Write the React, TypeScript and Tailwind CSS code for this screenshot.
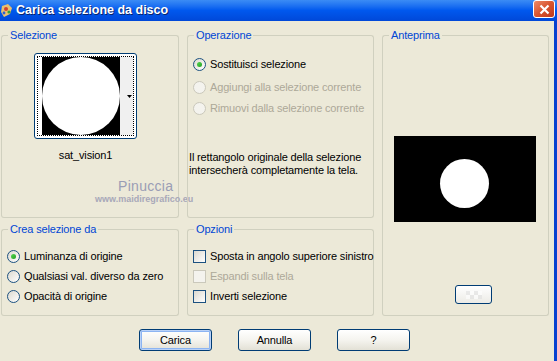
import type { ReactNode } from 'react';

const FONT = { fontFamily: '"Liberation Sans", Arial, sans-serif' };

function Group({ label, className, bodyClass, children }: { label: string; className?: string; bodyClass?: string; children?: ReactNode }) {
  return (
    <div className={`flex flex-col ${className ?? ''}`}>
      <div className="flex h-[13px]">
        <div className="w-[7px] h-[7px] self-end border-t border-l border-[#D0D0BF] rounded-tl-[3px]" />
        <span className="px-[2px] leading-[13px] text-[#0046D5] whitespace-nowrap">{label}</span>
        <div className="flex-1 h-[7px] self-end border-t border-r border-[#D0D0BF] rounded-tr-[3px]" />
      </div>
      <div className={`flex-1 relative border-x border-b border-[#D0D0BF] rounded-b-[3px] ${bodyClass ?? ''}`}>{children}</div>
    </div>
  );
}

function Radio({ checked, disabled }: { checked?: boolean; disabled?: boolean }) {
  return (
    <span
      className={`relative w-[13px] h-[13px] rounded-full border shrink-0 flex items-center justify-center ${
        disabled
          ? 'border-[#CAC8BB] bg-[#F4F3EE]'
          : 'border-[#1C5180] bg-gradient-to-br from-[#DCD9CF] to-white'
      }`}
    >
      {checked && <span className="w-[5px] h-[5px] rounded-full bg-gradient-to-br from-[#55D551] to-[#21A121]" />}
    </span>
  );
}

function Check({ disabled }: { disabled?: boolean }) {
  return (
    <span
      className={`w-[13px] h-[13px] border shrink-0 ${
        disabled ? 'border-[#CAC8BB] bg-[#F4F3EE]' : 'border-[#1C5180] bg-gradient-to-br from-[#DCD9CF] to-white'
      }`}
    />
  );
}

function Row({ control, text, disabled }: { control: ReactNode; text: string; disabled?: boolean }) {
  return (
    <div className="flex items-center gap-[4px] h-[13px]">
      {control}
      <span className={`whitespace-nowrap leading-[13px] ${disabled ? 'text-[#ACA899]' : 'text-black'}`}>{text}</span>
    </div>
  );
}

function XpButton({ label, isDefault }: { label: string; isDefault?: boolean }) {
  return (
    <button
      className={`w-[73px] h-[22px] rounded-[3px] border border-[#003C74] bg-gradient-to-b from-white via-[#F5F4EF] to-[#E3E1D6] text-black text-[11px] leading-none ${
        isDefault ? 'shadow-[inset_0_0_0_1px_#B9D1F7,inset_0_0_0_2px_#8CB4F2]' : ''
      }`}
    >
      {label}
    </button>
  );
}

export default function App() {
  return (
    <div
      className="w-[557px] h-[361px] bg-[#ECE9D8] flex flex-col overflow-hidden text-[11px] tracking-[-0.15px]"
      style={FONT}
    >
      {/* title bar */}
      <div className="h-[21px] flex items-center bg-gradient-to-b from-[#3B8CF5] via-[#0058EE] to-[#0048D8] relative">
        <svg width="14" height="16" viewBox="0 0 14 16">
          <path d="M2 3 L8 1 L12 5 L10 11 L4 14 L1 9 Z" fill="#E8C070" />
          <circle cx="6" cy="6" r="2" fill="#D04030" />
          <circle cx="9" cy="9" r="1.6" fill="#30A040" />
          <circle cx="4" cy="10" r="1.4" fill="#3060D0" />
        </svg>
        <span className="ml-[2px] text-white font-bold text-[12.5px] tracking-normal [text-shadow:1px_1px_0_#0A246A]">
          Carica selezione da disco
        </span>
        <div className="absolute right-[2px] top-[0px] w-[22px] h-[18px] rounded-[3px] border border-white bg-gradient-to-br from-[#EC8A68] via-[#D8542F] to-[#C0381A] flex items-center justify-center">
          <svg width="11" height="11" viewBox="0 0 11 11">
            <path d="M1.5 1.5 L9.5 9.5 M9.5 1.5 L1.5 9.5" stroke="white" strokeWidth="2.2" />
          </svg>
        </div>
      </div>

      {/* body */}
      <div className="flex-1 flex">
        <div className="flex-1 flex flex-col pl-[1px] pt-[8px]">
          <div className="flex gap-[8px]">
            {/* column 1 */}
            <div className="w-[178px] flex flex-col gap-[5px]">
              <Group label="Selezione" className="h-[189px]">
                <div className="ml-[32px] mt-[11px] w-[103px] h-[86px] rounded-[3px] border border-[#003C74] bg-white p-[2px]">
                  <div className="w-full h-full border border-dotted border-black flex items-center pl-[4px]">
                    <div className="w-[78px] h-[78px] bg-black flex items-center justify-center">
                      <div className="w-[78px] h-[78px] rounded-full bg-white" />
                    </div>
                    <div className="flex-1 h-full bg-[#F0F0F0] flex items-center justify-end pr-[1px]">
                      <svg width="5" height="3" viewBox="0 0 5 3">
                        <path d="M0 0 H5 L2.5 3 Z" fill="black" />
                      </svg>
                    </div>
                  </div>
                </div>
                <div className="mt-[10px] w-[103px] ml-[32px] text-center leading-[13px]">sat_vision1</div>
                <div className="absolute left-[116px] top-[137px] text-[14px] leading-none text-[#9A9DB5] tracking-[0.3px]">
                  Pinuccia
                </div>
                <div className="absolute left-[93px] top-[153px] text-[9px] leading-none font-bold text-[#A8A8B8] whitespace-nowrap tracking-normal">
                  www.maidiregrafico.eu
                </div>
              </Group>
              <Group label="Crea selezione da" className="h-[93px]">
                <div className="mt-[14px] pl-[5px] flex flex-col gap-[7px]">
                  <Row control={<Radio checked />} text="Luminanza di origine" />
                  <Row control={<Radio />} text="Qualsiasi val. diverso da zero" />
                  <Row control={<Radio />} text="Opacità di origine" />
                </div>
              </Group>
            </div>

            {/* column 2 */}
            <div className="w-[187px] flex flex-col gap-[5px]">
              <Group label="Operazione" className="h-[189px]" bodyClass="pl-[5px]">
                <div className="mt-[16px]">
                  <Row control={<Radio checked />} text="Sostituisci selezione" />
                </div>
                <div className="mt-[10px]">
                  <Row control={<Radio disabled />} text="Aggiungi alla selezione corrente" disabled />
                </div>
                <div className="mt-[8px]">
                  <Row control={<Radio disabled />} text="Rimuovi dalla selezione corrente" disabled />
                </div>
                <p className="mt-[36px] -ml-[4px] leading-[13px]">
                  Il rettangolo originale della selezione
                  <br />
                  intersecherà completamente la tela.
                </p>
              </Group>
              <Group label="Opzioni" className="h-[93px]">
                <div className="mt-[14px] pl-[5px] flex flex-col gap-[7px]">
                  <Row control={<Check />} text="Sposta in angolo superiore sinistro" />
                  <Row control={<Check disabled />} text="Espandi sulla tela" disabled />
                  <Row control={<Check />} text="Inverti selezione" />
                </div>
              </Group>
            </div>

            {/* column 3 */}
            <div className="w-[167px] flex flex-col">
              <Group label="Anteprima" className="h-[287px]" bodyClass="pl-[11px]">
                <div className="mt-[94px] w-[142px] h-[86px] bg-black flex justify-center pt-[23px] pr-[2px]">
                  <div className="w-[49px] h-[49px] rounded-full bg-white" />
                </div>
                <div className="mt-[63px] ml-[61px] w-[37px] h-[19px] rounded-[3px] border border-[#003C74] bg-gradient-to-b from-white to-[#ECEBE6] flex items-center justify-center">
                  <div className="grid grid-cols-4 w-[16px] h-[8px] opacity-60">
                    <span className="bg-[#E0E0E0]" />
                    <span className="bg-white" />
                    <span className="bg-[#E0E0E0]" />
                    <span className="bg-white" />
                    <span className="bg-white" />
                    <span className="bg-[#E0E0E0]" />
                    <span className="bg-white" />
                    <span className="bg-[#E0E0E0]" />
                  </div>
                </div>
              </Group>
            </div>
          </div>

          {/* buttons */}
          <div className="flex gap-[26px] pl-[138px] mt-[13px]">
            <XpButton label="Carica" isDefault />
            <XpButton label="Annulla" />
            <XpButton label="?" />
          </div>
        </div>
        <div className="w-[3px] bg-[#0841D0]" />
      </div>
    </div>
  );
}
